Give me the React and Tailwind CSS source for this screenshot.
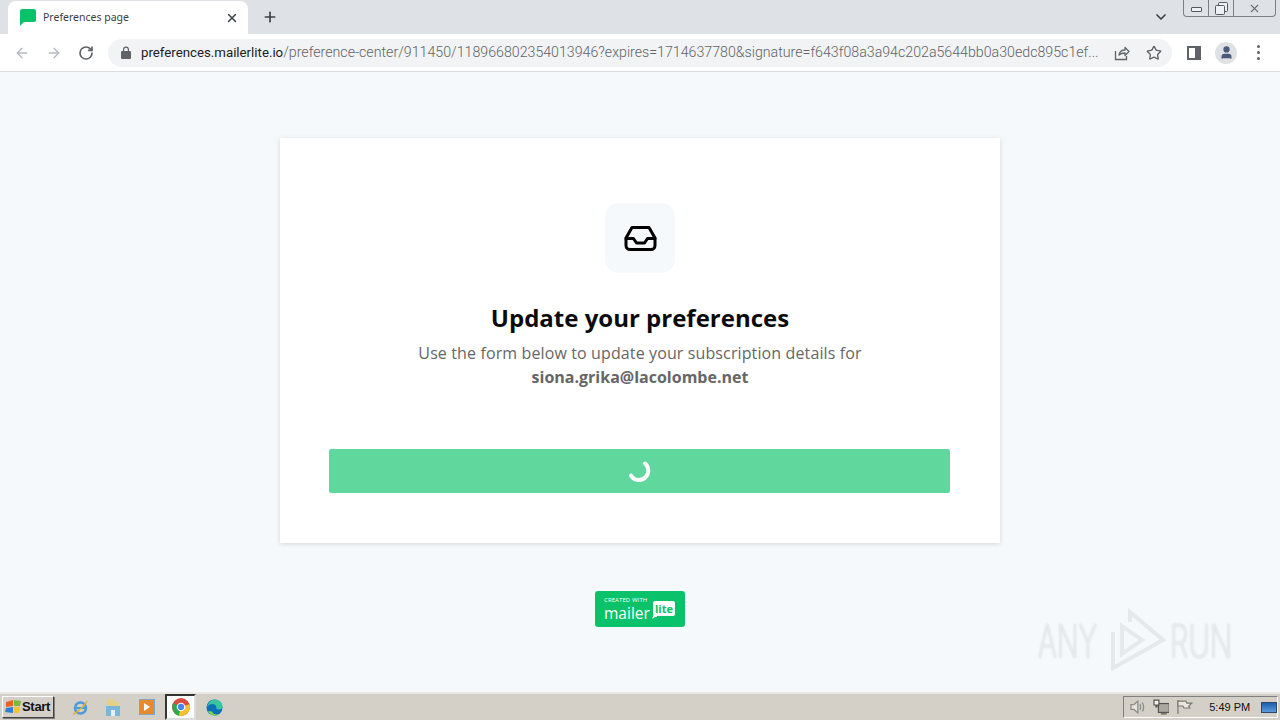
import { ArrowLeft, ArrowRight, RotateCw, Star, Plus, X, ChevronDown, User } from "lucide-react";

const InboxIcon = () => (
  <svg width="33" height="27" viewBox="0 0 33 27" fill="none" stroke="#000" strokeWidth="3" strokeLinejoin="round" strokeLinecap="round">
    <path d="M8 2.500h17l6 10.500v7.500a4 4 0 0 1-4 4H6a4 4 0 0 1-4-4V13z" />
    <path d="M2 13.500h7.500l3 4.500h8l3-4.500H31" />
  </svg>
);

const ShareIcon = () => (
  <svg width="16" height="16" viewBox="0 0 16 16" fill="none" stroke="#5f6368" strokeWidth="1.300">
    <path d="M1.500 6v8.500h11V11" />
    <path d="M5 10c.5-3.500 3-5 6-5V2.500l4 4-4 4V8c-2.500 0-4.500.5-6 2z" strokeLinejoin="round" />
  </svg>
);

const ChromeIcon = () => (
  <svg width="18" height="18" viewBox="0 0 16 16">
    <circle cx="8" cy="8" r="8" fill="#dd4b3e" />
    <path d="M8 8 1 4.500A8 8 0 0 0 6 15.700z" fill="#2fa84f" />
    <path d="M8 8l7.500-2.500A8 8 0 0 1 6 15.700z" fill="#fbc02d" />
    <circle cx="8" cy="8" r="3.800" fill="#fff" />
    <circle cx="8" cy="8" r="2.800" fill="#4285f4" />
  </svg>
);

const EdgeIcon = () => (
  <svg width="17" height="17" viewBox="0 0 17 17">
    <circle cx="8.500" cy="8.500" r="8" fill="#0c6fb8" />
    <path d="M1 8c1-4 4-7.500 8-7.500 4 0 7.500 3 7.500 7 0 2-1.500 3-3.500 3-2 0-3-1-2.500-2C10 6 8.500 5 6.500 5 4 5 2 6 1 8z" fill="#37c6a0" />
    <path d="M2 12c1 3 4 4.500 7 4.500 1.500 0 3-.5 4-1.500-3 1-6 0-7-2.500z" fill="#7bd651" />
  </svg>
);

const Taskbar = () => (
  <div className="h-[28px] shrink-0 flex items-center bg-[#d4d0c8] border-t-2 border-[#ece9e2] text-[#111]">
    <button className="ml-[2px] h-[22px] w-[52px] flex items-center pl-[2px] bg-[#d4d0c8] border border-t-white border-l-white border-r-[#404040] border-b-[#404040] shadow-[1px_1px_0_#808080] text-[13px] font-bold tracking-[-0.3px] font-['Liberation_Sans',sans-serif]">
      <svg width="17" height="16" viewBox="0 0 17 16">
        <path d="M1 3l7-2v6l-7 1z" fill="#e8622a" />
        <path d="M9 1l7 1-1 5-6 0z" fill="#7cb83a" />
        <path d="M1 9l7-1v6l-8-1z" fill="#2f7fd0" />
        <path d="M9 8l6 0-1 6-5 0z" fill="#f2c230" />
      </svg>
      Start
    </button>
    <div className="ml-[18px] flex items-center">
      <svg width="17" height="17" viewBox="0 0 17 17" fill="none">
        <circle cx="8.500" cy="9" r="5.500" stroke="#4a9ad8" strokeWidth="2.500" />
        <path d="M3 9h11" stroke="#4a9ad8" strokeWidth="2" />
        <path d="M1 15C4 15 14 5 15 2" stroke="#d8b23a" strokeWidth="1.500" />
      </svg>
      <svg className="ml-[16px]" width="16" height="18" viewBox="0 0 16 18">
        <path d="M2 1h6l2 3h4v14H2z" fill="#e4d088" />
        <rect x="1" y="8" width="14" height="10" fill="#79b6d8" />
        <rect x="6" y="12" width="4" height="6" fill="#e8eef2" />
      </svg>
      <div className="ml-[18px] h-[16px] w-[16px] flex items-center justify-center bg-[#e8892c] border border-[#7ba7cc]">
        <div className="h-0 w-0 border-y-[4px] border-l-[6px] border-y-transparent border-l-white" />
      </div>
      <div className="ml-[10px] h-[26px] w-[31px] flex items-center justify-center bg-white border-2 border-t-[#333] border-l-[#333] border-r-[#ddd] border-b-[#ddd]">
        <ChromeIcon />
      </div>
      <div className="ml-[10px]"><EdgeIcon /></div>
    </div>
    <div className="ml-auto mr-[2px] h-[22px] w-[155px] flex items-center border border-t-[#808080] border-l-[#808080] border-r-white border-b-white pl-[5px] font-['Liberation_Sans',sans-serif]">
      <svg width="18" height="16" viewBox="0 0 18 16" fill="none" stroke="#8a8a86" strokeWidth="1.300">
        <path d="M2 5.500h3l4-3.500v12l-4-3.500H2z" fill="#e6e4de" />
        <path d="M11 5c1 1.500 1 4.500 0 6M13.500 3.500c1.800 2.500 1.800 6.500 0 9" />
      </svg>
      <svg className="ml-[6px]" width="17" height="16" viewBox="0 0 17 16" fill="none" stroke="#55554f" strokeWidth="1.200">
        <rect x="5.500" y="4.500" width="11" height="9" fill="#a9a79f" />
        <path d="M1 1h5v5H4v2H3V6H1z" fill="#f4f3ee" />
        <path d="M8 15h6" />
      </svg>
      <svg className="ml-[7px]" width="17" height="16" viewBox="0 0 17 16" fill="none" stroke="#77776f" strokeWidth="1.200">
        <path d="M2 1v14" />
        <path d="M2 2h8l1 2h5l-3 3 1 2H8L7 7H2z" fill="#e9e7e0" />
      </svg>
      <span className="ml-[16px] text-[11px] whitespace-nowrap">5:49 PM</span>
      <div className="ml-[11px] h-[11px] w-[16px] bg-gradient-to-b from-[#1d5fae] to-[#5d9ad8] border border-[#2d4a6e]" />
    </div>
  </div>
);

const App = () => {
  return (
    <div className="relative h-screen w-full overflow-hidden flex flex-col bg-[#f6f9fb] font-['Open_Sans',sans-serif]">
      {/* tab strip */}
      <div className="h-[34px] shrink-0 flex bg-[#dee1e6] relative">
        <div className="ml-[8px] mt-[1px] h-[33px] w-[240px] flex items-center bg-white rounded-t-[8px] pl-[12px] pr-[9px]">
          <svg width="16" height="17" viewBox="0 0 16 17">
            <path d="M2 0h12a2 2 0 0 1 2 2v9a2 2 0 0 1-2 2H4l-4 4V2a2 2 0 0 1 2-2z" fill="#09c269" />
          </svg>
          <span className="ml-[7px] text-[10.500px] text-[#3c4043] font-['Noto_Sans',sans-serif]">Preferences page</span>
          <X className="ml-auto" size={14} strokeWidth={2.500} color="#3c4043" />
        </div>
        <Plus className="ml-[14px] mt-[9px]" size={16} strokeWidth={2.500} color="#3c4043" />
        <ChevronDown className="ml-auto mr-[111px] mt-[9px]" size={16} strokeWidth={2.500} color="#3c4043" />
        <div className="absolute top-0 right-[4px] h-[17px] w-[93px] flex border border-t-0 border-[#7b7f87] rounded-b-[4px] bg-[#dee1e6]">
          <div className="w-[25px] flex items-center justify-center border-r border-[#7b7f87]">
            <div className="mt-[2px] h-[5px] w-[11px] border border-[#55585e] rounded-[1px] bg-[#eef0f3]" />
          </div>
          <div className="w-[25px] flex items-center justify-center border-r border-[#7b7f87]">
            <svg width="13" height="13" viewBox="0 0 13 13" fill="#eef0f3" stroke="#55585e">
              <rect x="3.500" y="0.500" width="9" height="9" rx="1" />
              <rect x="0.500" y="3.500" width="9" height="9" rx="1" />
            </svg>
          </div>
          <div className="flex-1 flex items-center justify-center">
            <X size={13} strokeWidth={2} color="#6b6e74" />
          </div>
        </div>
      </div>
      {/* toolbar */}
      <div className="h-[38px] shrink-0 flex items-center bg-white border-b border-[#dadce0]">
        <ArrowLeft className="ml-[14px]" size={16} strokeWidth={2} color="#b6b9bd" />
        <ArrowRight className="ml-[16px]" size={16} strokeWidth={2} color="#b6b9bd" />
        <RotateCw className="ml-[16px]" size={16} strokeWidth={2.500} color="#5f6368" />
        <div className="ml-[14px] h-[28px] w-[1064px] flex items-center rounded-full bg-[#f1f3f4] pl-[13px] pr-[10px]">
          <svg width="10" height="13" viewBox="0 0 10 13" fill="#5f6368">
            <path d="M1 5h1V3.500a3 3 0 0 1 6 0V5h1a1 1 0 0 1 1 1v6a1 1 0 0 1-1 1H1a1 1 0 0 1-1-1V6a1 1 0 0 1 1-1zm2.200 0h3.600V3.500a1.800 1.800 0 0 0-3.600 0z" />
          </svg>
          <span className="ml-[10px] whitespace-nowrap text-[13.250px] text-[#202124] font-['Roboto',sans-serif]">
            preferences.mailerlite.io<span className="text-[14.200px] text-[#5f6368] font-light">/preference-center/911450/118966802354013946?expires=1714637780&amp;signature=f643f08a3a94c202a5644bb0a30edc895c1ef...</span>
          </span>
          <div className="ml-auto flex items-center gap-[16px]">
            <ShareIcon />
            <Star size={16} strokeWidth={2} color="#5f6368" />
          </div>
        </div>
        <div className="ml-[15px] h-[14px] w-[14px] border-2 border-[#5f6368] border-r-[6px]" />
        <div className="ml-[14px] h-[22px] w-[22px] flex items-center justify-center rounded-full bg-[#dfe1e5]">
          <User size={15} color="#4a5b78" fill="#4a5b78" />
        </div>
        <div className="ml-[20px] flex flex-col gap-[3px]">
          <div className="h-[3px] w-[3px] rounded-full bg-[#5f6368]" />
          <div className="h-[3px] w-[3px] rounded-full bg-[#5f6368]" />
          <div className="h-[3px] w-[3px] rounded-full bg-[#5f6368]" />
        </div>
      </div>
      {/* page */}
      <main className="flex-1 flex flex-col items-center pt-[66px]">
        <div className="w-[720px] h-[405px] flex flex-col items-center bg-white shadow-[0_1px_5px_rgba(0,0,0,0.13)] pt-[65px]">
          <div className="h-[70px] w-[70px] flex items-center justify-center rounded-[14px] bg-[#f6f9fb]">
            <InboxIcon />
          </div>
          <h1 className="mt-[28px] text-[24px] leading-[34px] font-bold text-[#0b0b0b]">Update your preferences</h1>
          <p className="mt-[6px] text-[16px] leading-[24px] tracking-[0.12px] text-center text-[#666]">
            Use the form below to update your subscription details for
            <br />
            <strong className="font-bold tracking-normal">siona.grika@lacolombe.net</strong>
          </p>
          <div className="mt-[60px] h-[44px] w-[621px] -translate-x-[1px] flex items-center justify-center rounded-[2px] bg-[#60d89d]">
            <svg width="24" height="24" viewBox="0 0 24 24" fill="none" stroke="#fff" strokeWidth="4" strokeLinecap="round">
              <path d="M18 4.500a9 9 0 0 1 1 13 9 9 0 0 1-15-1" />
            </svg>
          </div>
        </div>
        <div className="mt-[48px] h-[36px] w-[90px] relative flex flex-col justify-center rounded-[3px] bg-[#09c269] pl-[9px] text-white">
          <span className="text-[6px] leading-[7px] tracking-[0.1px]">CREATED WITH</span>
          <span className="text-[15.500px] leading-[18px] font-medium">mailer</span>
          <span className="absolute right-[10px] top-[10px] h-[15px] w-[22px] flex items-center justify-center rounded-[2px] bg-white text-[11px] font-bold leading-none text-[#09c269]">lite</span>
          <svg className="absolute right-[28px] top-[23px]" width="5" height="5" viewBox="0 0 5 5" fill="#fff">
            <path d="M2 0h3v3H3L0 5z" />
          </svg>
        </div>
      </main>
      <Taskbar />
      {/* watermark */}
      <div className="absolute left-[1038px] top-[608px] h-[66px] flex items-center text-[#e9ecef] font-['Inter',sans-serif] font-extralight text-[46px] leading-none pointer-events-none [text-shadow:0_0_3px_#cdd1d4]">
        <span className="w-[70px] origin-left scale-x-[0.62]">ANY</span>
        <svg width="60" height="66" viewBox="0 0 60 66" fill="none" stroke="#e6e9ec" strokeWidth="4">
          <path d="M14 18v28l20-14z" />
          <path d="M5 24v36l50-28L22 4v10" />
        </svg>
        <span className="ml-[2px] w-[66px] origin-left scale-x-[0.64]">RUN</span>
      </div>
    </div>
  );
};

export default App;
